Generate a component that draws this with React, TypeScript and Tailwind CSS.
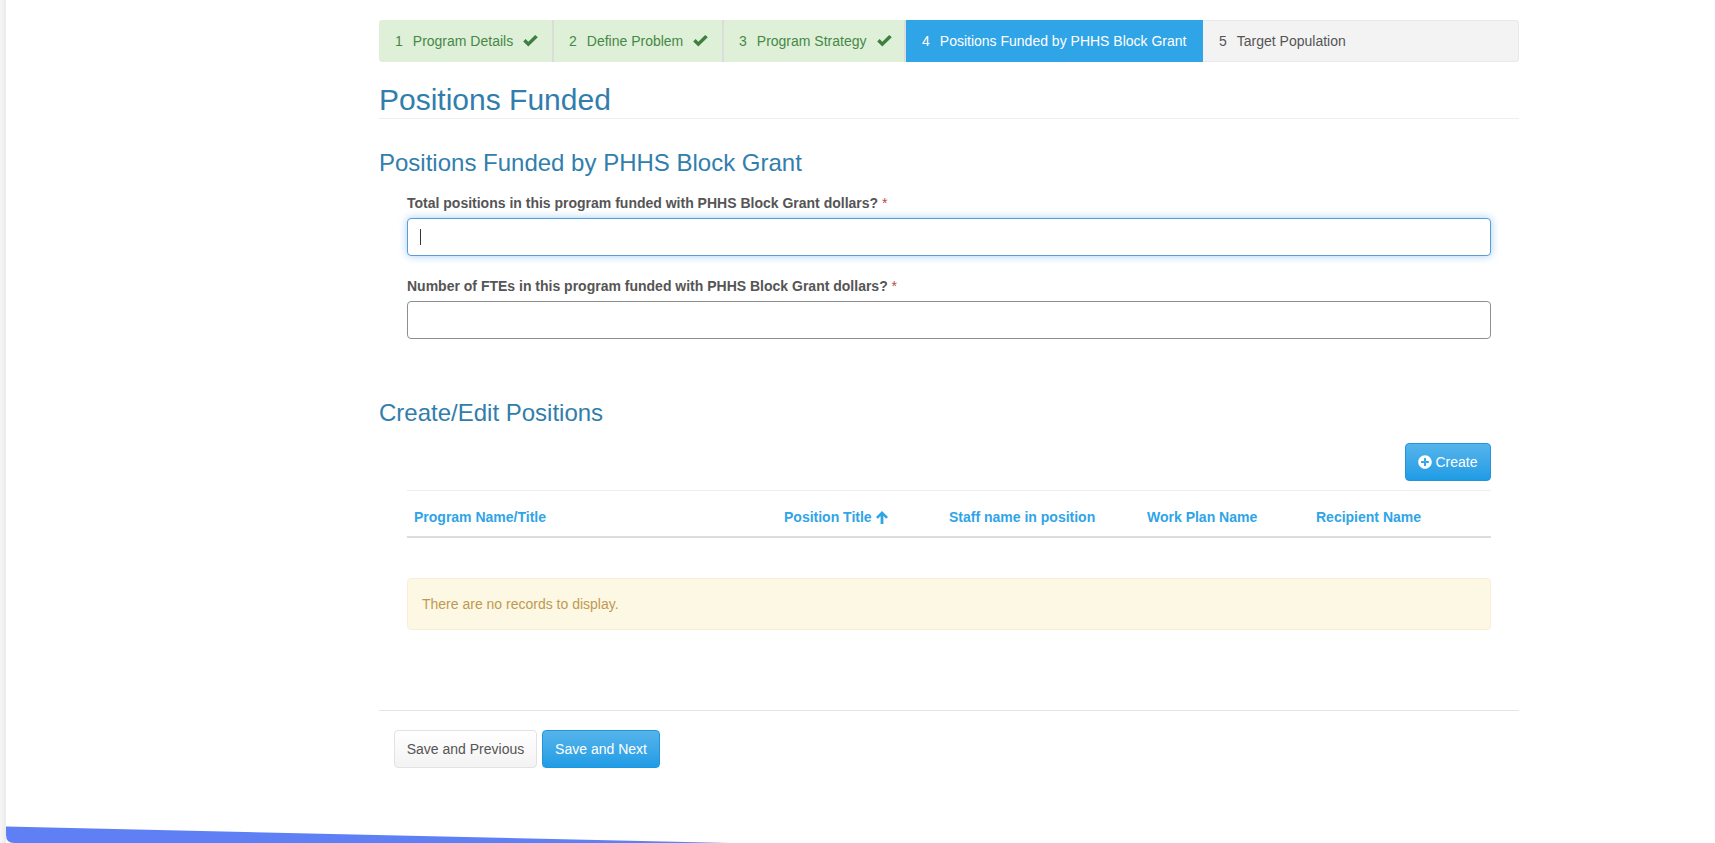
import { FaPlusCircle } from 'react-icons/fa'

const doneSteps = [
  { n: 1, label: 'Program Details', width: 'w-[175px] pl-4' },
  { n: 2, label: 'Define Problem', width: 'w-[170px] pl-[15px]' },
  { n: 3, label: 'Program Strategy', width: 'w-[182px] pl-[15px]' },
]

const columns = ['Program Name/Title', 'Position Title', 'Staff name in position', 'Work Plan Name', 'Recipient Name']

function OkIcon() {
  return (
    <svg className="ml-[10px]" width="15" height="12" viewBox="0 0 15 12" fill="#3f7f40">
      <path d="M5.3 11.6 0.2 6.5 2.6 4.1 5.3 6.8 12.2 0 14.8 2.3Z" />
    </svg>
  )
}

function SortArrow() {
  return (
    <svg width="12" height="13" viewBox="0 0 12 13" fill="currentColor">
      <path d="M6 0 12 6 10.2 7.8 7.4 5V13H4.6V5L1.8 7.8 0 6Z" />
    </svg>
  )
}

function Stepper() {
  return (
    <ol className="flex h-[42px] overflow-hidden rounded-[4px] bg-[#f3f3f3] text-[14px] shadow-[inset_0_0_0_1px_#e8e8e8]">
      {doneSteps.map((step) => (
        <li key={step.n} className={`flex items-center border-r-2 border-[#dcdcdc] bg-[#dff0d8] text-[#468847] ${step.width}`}>
          <span className="mr-[10px]">{step.n}</span>
          <span>{step.label}</span>
          <OkIcon />
        </li>
      ))}
      <li className="flex w-[297px] items-center bg-[#2fa4e7] pl-4 text-white">
        <span className="mr-[10px]">4</span>
        <span>Positions Funded by PHHS Block Grant</span>
      </li>
      <li className="flex flex-1 items-center pl-4 text-[#555555]">
        <span className="mr-[10px]">5</span>
        <span>Target Population</span>
      </li>
    </ol>
  )
}

function Field({ label, focused }: { label: string; focused?: boolean }) {
  return (
    <div className="flex flex-col">
      <label className="h-[24px] text-[14px] leading-[18px] font-bold text-[#555555]">
        {label} <span className="font-normal text-[#b94a48]">*</span>
      </label>
      <div className="relative">
        <input
          type="text"
          className={
            focused
              ? 'block h-[38px] w-full rounded-[4px] border border-[#5a9bd8] bg-white shadow-[0_0_8px_rgba(102,175,233,0.6)] outline-none'
              : 'block h-[38px] w-full rounded-[4px] border border-[#8f8f8f] bg-white outline-none'
          }
        />
        {focused && <div className="absolute top-[11px] left-[13px] h-[16px] w-px bg-[#333333]" />}
      </div>
    </div>
  )
}

export default function App() {
  return (
    <div className="relative h-[843px] overflow-hidden bg-white font-['Liberation_Sans',Arial,sans-serif]">
      <div className="absolute top-0 bottom-0 left-0 w-[6px] bg-gradient-to-r from-[#f6f6f6] to-[#ebebeb]" />
      <svg className="absolute bottom-0 left-0" width="760" height="20" viewBox="0 0 760 20">
        <path d="M6 3.5 L730 20 L14 20 Q6 20 6 12 Z" fill="#5f80f5" />
      </svg>

      <main className="ml-[379px] w-[1140px] pt-5">
        <Stepper />

        <h1 className="mt-[21px] border-b border-[#eeeeee] pb-[2px] text-[30px] leading-[33px] font-normal text-[#317eac]">
          Positions Funded
        </h1>

        <h2 className="mt-[31px] text-[24px] leading-[26px] font-normal text-[#317eac]">
          Positions Funded by PHHS Block Grant
        </h2>

        <div className="mt-[18px] flex w-[1112px] flex-col gap-[21px] pl-[28px]">
          <Field label="Total positions in this program funded with PHHS Block Grant dollars?" focused />
          <Field label="Number of FTEs in this program funded with PHHS Block Grant dollars?" />
        </div>

        <h2 className="mt-[61px] text-[24px] leading-[26px] font-normal text-[#317eac]">Create/Edit Positions</h2>

        <section className="mt-[17px] ml-[28px] w-[1084px]">
          <div className="flex justify-end">
            <button className="flex h-[38px] w-[86px] items-center justify-center gap-[3px] rounded-[4px] border border-[#2196dc] bg-gradient-to-b from-[#54b4eb] to-[#1d9ce5] text-[14px] text-white">
              <FaPlusCircle size={14} />
              Create
            </button>
          </div>

          <div className="mt-[9px] grid h-[48px] grid-cols-[370px_165px_198px_169px_182px] items-center border-t border-b-2 border-t-[#eeeeee] border-b-[#dddddd] pt-[8px] text-[14px] font-bold text-[#2fa4e7]">
            {columns.map((col) => (
              <div key={col} className="flex items-center gap-[4px] px-[7px]">
                {col}
                {col === 'Position Title' && <SortArrow />}
              </div>
            ))}
          </div>

          <div className="mt-[40px] flex h-[52px] items-center rounded-[4px] border border-[#fbeed5] bg-[#fcf8e3] px-[14px] text-[14px] text-[#c09853]">
            There are no records to display.
          </div>
        </section>

        <div className="mt-[80px] flex gap-[5px] border-t border-[#e5e5e5] pt-[19px] pl-[15px] text-[14px]">
          <button className="h-[38px] w-[143px] rounded-[4px] border border-[#e2e2e2] bg-gradient-to-b from-white to-[#f3f3f3] text-[#555555]">
            Save and Previous
          </button>
          <button className="h-[38px] w-[118px] rounded-[4px] border border-[#2196dc] bg-gradient-to-b from-[#54b4eb] to-[#1d9ce5] text-white">
            Save and Next
          </button>
        </div>
      </main>
    </div>
  )
}
